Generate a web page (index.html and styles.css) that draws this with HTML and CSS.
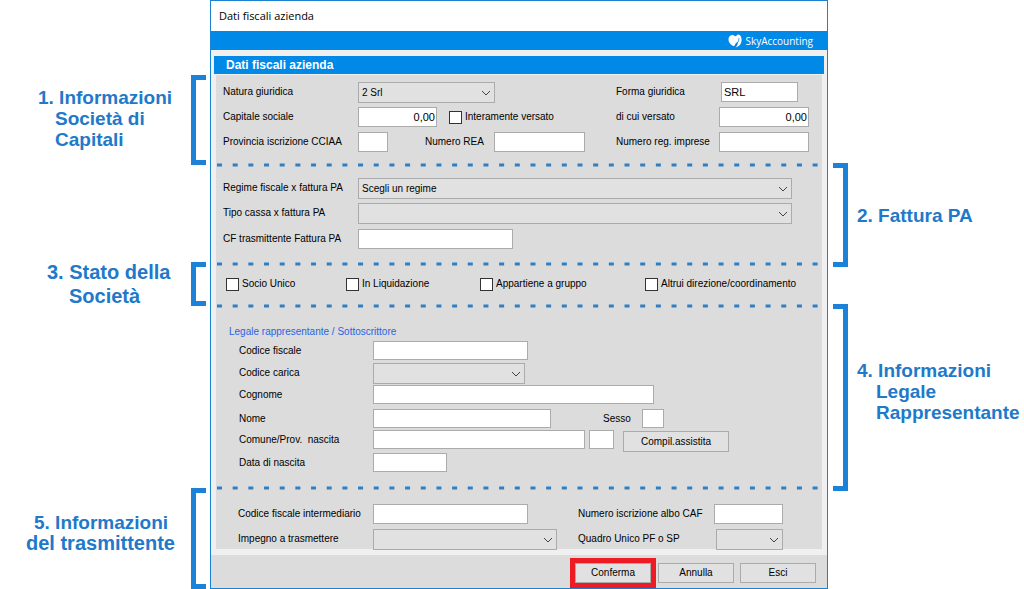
FILE: index.html
```html
<!DOCTYPE html>
<html lang="it">
<head>
<meta charset="utf-8">
<title>Dati fiscali azienda</title>
<link rel="stylesheet" href="styles.css">
</head>
<body>
<svg class="defs" aria-hidden="true"><symbol id="dots"><line x1="0" y1="2" x2="100%" y2="2" pathLength="602" stroke="#2f7fc4" stroke-width="3" stroke-dasharray="5 10.7"/></symbol></svg>
<form class="page">
  <div class="row">
    <header class="window top">
      <h1 class="title">Dati fiscali azienda</h1>
      <div class="brandbar">
        <svg class="logo" viewBox="0 0 14 14" aria-hidden="true"><path fill="#fff" d="M.5 5C.8 2.500 2.500.900 4.800 1c1.200.1 1.700 1.300 2.700 1.300S9 .6 10.300.6c2 .1 3.400 2.600 3.300 5.500-.1 3.900-2.500 6.700-6 7.500 1.500-1.700 2.500-3.600 2.400-5.800C8.600 8.300 7.500 9.400 6.900 11c-.4 1-1.100 1.300-2.100.7C2 10.200.2 7.900.5 5z"/><path fill="none" stroke="#0089e6" stroke-width=".8" d="M10 8c.6-1.200.9-2.400 1-3.800"/></svg>
        <span>SkyAccounting</span>
      </div>
      <h2 class="heading">Dati fiscali azienda</h2>
    </header>
  </div>

  <div class="row">
    <aside class="note left"><p class="text n1">1. Informazioni<br><span class="in">Società di</span><br><span class="in">Capitali</span></p><i class="bracket"></i></aside>
    <section class="window"><div class="pane company">
      <label for="natura">Natura giuridica</label>
      <div><select id="natura" class="w137"><option>2 Srl</option></select></div>
      <label for="forma">Forma giuridica</label>
      <div class="nudge"><input id="forma" class="w76" value="SRL"></div>
      <label for="capitale">Capitale sociale</label>
      <div class="cell"><input id="capitale" class="w79 num" value="0,00"><label class="check gap12"><input type="checkbox">Interamente versato</label></div>
      <label for="versato">di cui versato</label>
      <div><input id="versato" class="full num" value="0,00"></div>
      <label for="prov">Provincia iscrizione CCIAA</label>
      <div class="cell rea"><input id="prov" class="w29"><label for="rea">Numero REA</label><input id="rea" class="w90"></div>
      <label for="reg">Numero reg. imprese</label>
      <div><input id="reg" class="full"></div>
    </div></section>
  </div>

  <div class="row">
    <section class="window"><div class="pane invoice">
      <svg class="dots"><use href="#dots"/></svg>
      <label for="regime">Regime fiscale x fattura PA</label>
      <select id="regime" class="full"><option>Scegli un regime</option></select>
      <label for="cassa">Tipo cassa x fattura PA</label>
      <select id="cassa" class="full"></select>
      <label for="cf">CF trasmittente Fattura PA</label>
      <div><input id="cf" class="w155"></div>
    </div></section>
    <aside class="note right"><i class="bracket"></i><p class="text">2. Fattura PA</p></aside>
  </div>

  <div class="row">
    <aside class="note left state"><p class="text big n3">3. Stato della<br><span class="in3">Società</span></p><i class="bracket"></i></aside>
    <section class="window"><div class="pane status">
      <svg class="dots"><use href="#dots"/></svg>
      <label class="check"><input type="checkbox">Socio Unico</label>
      <label class="check"><input type="checkbox">In Liquidazione</label>
      <label class="check"><input type="checkbox">Appartiene a gruppo</label>
      <label class="check"><input type="checkbox">Altrui direzione/coordinamento</label>
    </div></section>
  </div>

  <div class="row">
    <section class="window"><div class="pane legal">
      <svg class="dots"><use href="#dots"/></svg>
      <h3 class="legend">Legale rappresentante / Sottoscrittore</h3>
      <label for="codfis">Codice fiscale</label>
      <div><input id="codfis" class="w155"></div>
      <label for="carica">Codice carica</label>
      <div><select id="carica" class="w152"></select></div>
      <label for="cognome">Cognome</label>
      <div><input id="cognome" class="w280"></div>
      <label for="nome">Nome</label>
      <div class="cell sex"><input id="nome" class="w177"><label for="sesso">Sesso</label><input id="sesso" class="w22"></div>
      <label for="comune">Comune/Prov.&nbsp; nascita</label>
      <div class="cell birth"><input id="comune" class="w212"><input class="w25" aria-label="Provincia di nascita"><button type="button" class="btn assist">Compil.assistita</button></div>
      <label for="data">Data di nascita</label>
      <div><input id="data" class="w74"></div>
    </div></section>
    <aside class="note right"><i class="bracket"></i><p class="text n4">4. Informazioni<br><span class="in4">Legale</span><br><span class="in4">Rappresentante</span></p></aside>
  </div>

  <div class="row last">
    <aside class="note left"><p class="text n5"><span class="in5">5. Informazioni</span><br><span class="wide">del trasmittente</span></p><i class="bracket"></i></aside>
    <section class="window bottom">
      <div class="pane sender">
        <svg class="dots"><use href="#dots"/></svg>
        <label for="inter">Codice fiscale intermediario</label>
        <div><input id="inter" class="w155"></div>
        <label for="caf">Numero iscrizione albo CAF</label>
        <input id="caf" class="w69">
        <label for="impegno">Impegno a trasmettere</label>
        <div><select id="impegno" class="w184"></select></div>
        <label for="quadro">Quadro Unico PF o SP</label>
        <select id="quadro" class="w67"></select>
      </div>
      <footer class="actions">
        <span class="highlight"><button type="submit" class="btn">Conferma</button></span>
        <button type="button" class="btn">Annulla</button>
        <button type="button" class="btn">Esci</button>
      </footer>
    </section>
  </div>
</form>
</body>
</html>
```
FILE: styles.css
```css
* { box-sizing: border-box; }
body {
  margin: 0;
  background: #fff;
  color: #000;
  font: 10px/20px "Liberation Sans", Arial, sans-serif;
}
h1, h2, h3, p { margin: 0; font-weight: normal; }
.defs { position: absolute; width: 0; height: 0; }

.page { display: flex; flex-direction: column; min-height: 100vh; }
.row { display: grid; grid-template-columns: 210px minmax(618px, 1fr) 196px; }
.row.last { flex: 1; }
.window {
  grid-column: 2;
  grid-row: 1;
  background: #f0f0f0;
  border: solid #1b82d2;
  border-width: 0 1px;
  padding: 0 5px;
}
.window.top { border-top-width: 1px; padding: 0; }
.window.bottom { border-bottom-width: 1px; padding: 0; display: flex; flex-direction: column; }

.title {
  height: 30px;
  padding-left: 8px;
  background: #fff;
  font: 11px/29px "Open Sans", "Noto Sans", sans-serif;
}
.brandbar {
  display: flex;
  align-items: center;
  justify-content: flex-end;
  gap: 3px;
  height: 19px;
  padding: 1px 14px 0 0;
  background: #0089e6;
  color: #fff;
  font: 10px/16px "Open Sans", "Noto Sans", sans-serif;
}
.logo { width: 14px; height: 14px; }
.heading {
  height: 18px;
  margin: 6px 3px 1px;
  padding-left: 12px;
  background: #0089e6;
  color: #fff;
  font: bold 12px/18px "Liberation Sans", Arial, sans-serif;
}

.pane { position: relative; display: grid; background: #dcdcdc; white-space: nowrap; align-items: start; }
.dots { position: absolute; left: 1px; top: -2px; width: calc(100% - 5px); height: 4px; }
.company {
  grid-template-columns: 135px 1fr 103px 90px;
  grid-template-rows: 25px 25px 33px;
  padding: 7px 13px 0 7px;
}
.invoice {
  grid-template-columns: 135px 1fr;
  grid-template-rows: 25px 26px 35px;
  padding: 13px 30px 0 7px;
}
.status {
  grid-template-columns: 120px 134px 165px 1fr;
  padding: 10px 10px 12px;
}
.legal {
  grid-template-columns: 134px 1fr;
  grid-template-rows: 19px 22px 22px 24px 21px 23px 35px;
  padding: 16px 10px 0 23px;
}
.sender {
  grid-template-columns: 135px 1fr 136px 69px;
  grid-template-rows: 25px 20px;
  margin: 0 5px;
  padding: 16px 39px 0 22px;
}
.sender > .w69, .sender > .w67 { justify-self: end; }
.legend {
  grid-column: 1 / -1;
  margin-left: -10px;
  color: #2b63e0;
  font-size: 10px;
}
.cell { display: flex; align-items: flex-start; }
.rea label { margin: 0 0 0 37px; width: 69px; }
.sex label { margin-left: 52px; width: 39px; }
.birth { gap: 4px; }
.nudge { padding-left: 2px; }
.gap12 { margin-left: 12px; }

input, select, .btn { font: inherit; color: #000; border: 1px solid #ababab; border-radius: 0; margin: 0; }
input { display: block; height: 20px; padding: 0 2px; background: #fff; font-size: 11px; }
.legal input { height: 19px; }
.num { text-align: right; padding-right: 1px; }
select {
  display: block;
  height: 21px;
  padding: 0 20px 0 3px;
  appearance: none;
  background: #e1e1e1 url("data:image/svg+xml,%3Csvg xmlns='http://www.w3.org/2000/svg' width='10' height='6'%3E%3Cpath d='M1 1l4 4 4-4' fill='none' stroke='%23444'/%3E%3C/svg%3E") no-repeat right 3px center;
}
.check { display: flex; align-items: center; gap: 3px; }
.check input { appearance: none; width: 13px; height: 13px; padding: 0; border-color: #333; }
.check input:checked { background: #333; box-shadow: inset 0 0 0 2px #fff; }

.full { width: 100%; }
.w22 { width: 22px; }
.w25 { width: 25px; }
.w29 { width: 30px; }
.w67 { width: 67px; }
.w69 { width: 69px; }
.w74 { width: 74px; }
.w76 { width: 77px; }
.w79 { width: 79px; }
.w90 { width: 91px; }
.w137 { width: 137px; }
.w152 { width: 152px; }
.w155 { width: 155px; }
.w177 { width: 178px; }
.w184 { width: 184px; }
.w212 { width: 212px; }
.w280 { width: 281px; }

.btn { width: 76px; height: 20px; padding: 0; background: #e1e1e1; line-height: 18px; }
.assist { width: 106px; height: 21px; margin: 1px 0 0 5px; }
.actions {
  flex: 1;
  display: flex;
  align-items: center;
  justify-content: flex-end;
  gap: 6px;
  margin-top: 6px;
  padding: 2px 11px 0 0;
  background: #dcdcdc;
}
.highlight { display: flex; border: 5px solid #ed1c24; margin-right: -4px; }

.note { display: flex; color: #2079c9; }
.note.left { grid-column: 1; grid-row: 1; justify-content: space-between; padding-right: 4px; }
.note.right { grid-column: 3; grid-row: 1; margin: -2px 0 -3px; padding-left: 5px; gap: 9px; align-items: center; }
.bracket { width: 15px; align-self: stretch; border: 5px solid #1b82d8; flex: none; }
.left .bracket { border-right: 0; }
.right .bracket { border-left: 0; }
.text { font: bold 19px/21px "Liberation Sans", Arial, sans-serif; white-space: nowrap; }
.text.big { font-size: 20px; line-height: 24px; }
.wide { font-size: 20px; }
.in { padding-left: 17px; }
.in3 { padding-left: 22px; }
.in4 { padding-left: 19px; }
.in5 { padding-left: 8px; }
.n1 { padding: 12px 0 0 38px; }
.state { margin-top: -2px; }
.n3 { padding-left: 47px; margin: -2px 0; }
.n4 { padding-bottom: 12px; }
.n5 { padding: 24px 0 0 26px; }
```
